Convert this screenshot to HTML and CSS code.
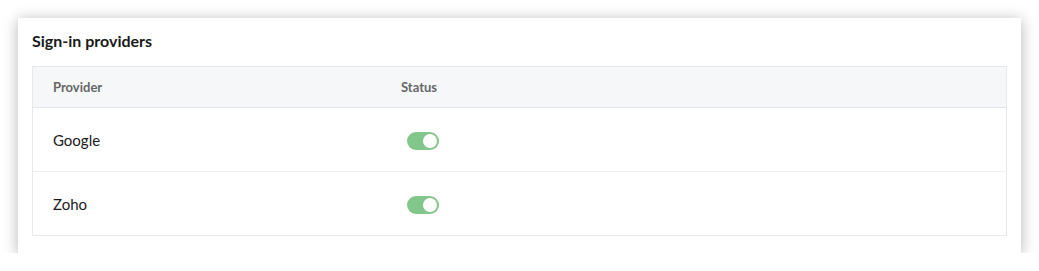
FILE: index.html
```html
<!DOCTYPE html>
<html lang="en">
<head>
    <meta charset="UTF-8">
    <meta name="viewport" content="width=device-width, initial-scale=1.0">
    <title>Sign-in providers</title>
    <link rel="stylesheet" href="styles.css">
</head>
<body>
    <div class="card">
        <h2>Sign-in providers</h2>
        <table class="providers">
            <thead>
                <tr>
                    <th class="col-provider">Provider</th>
                    <th>Status</th>
                </tr>
            </thead>
            <tbody>
                <tr>
                    <td>Google</td>
                    <td class="col-status"><span class="toggle on"><span class="knob"></span></span></td>
                </tr>
                <tr>
                    <td>Zoho</td>
                    <td class="col-status"><span class="toggle on"><span class="knob"></span></span></td>
                </tr>
            </tbody>
        </table>
    </div>
</body>
</html>
```

FILE: styles.css
```css
body {
    font-family: 'Lato', 'Liberation Sans', sans-serif;
    background-color: #ffffff;
    margin: 0;
    padding: 18px 18px 0 18px;
}
.card {
    width: 1003px;
    height: 235px;
    box-sizing: border-box;
    background: #fff;
    padding: 12px 14px 0 14px;
    box-shadow: 0 2px 14px rgba(0, 0, 0, 0.3);
}
h2 {
    margin: 0 0 14px 0;
    font-size: 16px;
    font-weight: 700;
    color: #1a1a1a;
    line-height: 22px;
}
.providers {
    width: 975px;
    table-layout: fixed;
    border-collapse: collapse;
    border: 1px solid #e6e8ee;
}
th, td {
    text-align: left;
    padding: 0 0 0 20px;
}
th {
    height: 40px;
    background-color: #f6f7f9;
    color: #666;
    font-size: 13px;
    font-weight: 700;
    border-bottom: 1px solid #e2e4ec;
}
.col-provider {
    width: 328px;
}
td {
    height: 63px;
    font-size: 15px;
    color: #1a1a1a;
    border-bottom: 1px solid #eceef2;
}
.col-status {
    padding-left: 26px;
}
tbody tr:last-child td {
    border-bottom: none;
}
.toggle {
    display: inline-flex;
    align-items: center;
    justify-content: flex-end;
    width: 32px;
    height: 18px;
    box-sizing: border-box;
    padding: 0 2px;
    border-radius: 9px;
    background-color: #82c68c;
    vertical-align: middle;
}
.knob {
    width: 14px;
    height: 14px;
    border-radius: 50%;
    background: #fff;
}
```
